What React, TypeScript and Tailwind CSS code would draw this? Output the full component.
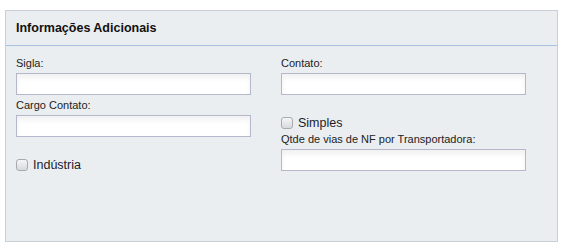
const Field = ({ label, className = '' }: { label: string; className?: string }) => (
  <div className={className}>
    <div className="h-[14px] leading-[14px] text-[11px] text-[#222]">{label}</div>
    <input
      type="text"
      className="mt-[3px] block w-full h-[22px] border border-[#b5b8cb] bg-white shadow-[inset_0_4px_5px_rgba(0,0,0,0.06)] outline-none"
    />
  </div>
);

const Check = ({ label }: { label: string }) => (
  <label className="flex items-center gap-[5px] h-[14px]">
    <span className="block w-[12px] h-[12px] rounded-[3px] border border-[#a7abb0] bg-gradient-to-b from-[#f4f5f6] to-[#d7dadd]" />
    <span className="text-[12.5px] leading-[14px] text-[#1c1c2c]">{label}</span>
  </label>
);

export default function App() {
  return (
    <div className="w-[568px] h-[252px] bg-white pt-[10px] pl-[5px]" style={{ fontFamily: '"Liberation Sans", Arial, sans-serif' }}>
      <div className="w-[553px] h-[232px] border border-[#c9cfd6] bg-[#ebeef0]">
        <div className="h-[35px] border-b border-[#a9c1e0] pl-[10px] flex items-center">
          <h2 className="text-[12.5px] font-bold text-[#111] pt-[1px]">Informações Adicionais</h2>
        </div>
        <div className="grid grid-cols-[235px_245px] gap-x-[30px] pl-[10px] pt-[10px]">
          <div>
            <Field label="Sigla:" />
            <Field label="Cargo Contato:" className="mt-[3px]" />
            <div className="mt-[21px]">
              <Check label="Indústria" />
            </div>
          </div>
          <div>
            <Field label="Contato:" />
            <div className="mt-[21px]">
              <Check label="Simples" />
            </div>
            <Field label="Qtde de vias de NF por Transportadora:" className="mt-[2px]" />
          </div>
        </div>
      </div>
    </div>
  );
}
